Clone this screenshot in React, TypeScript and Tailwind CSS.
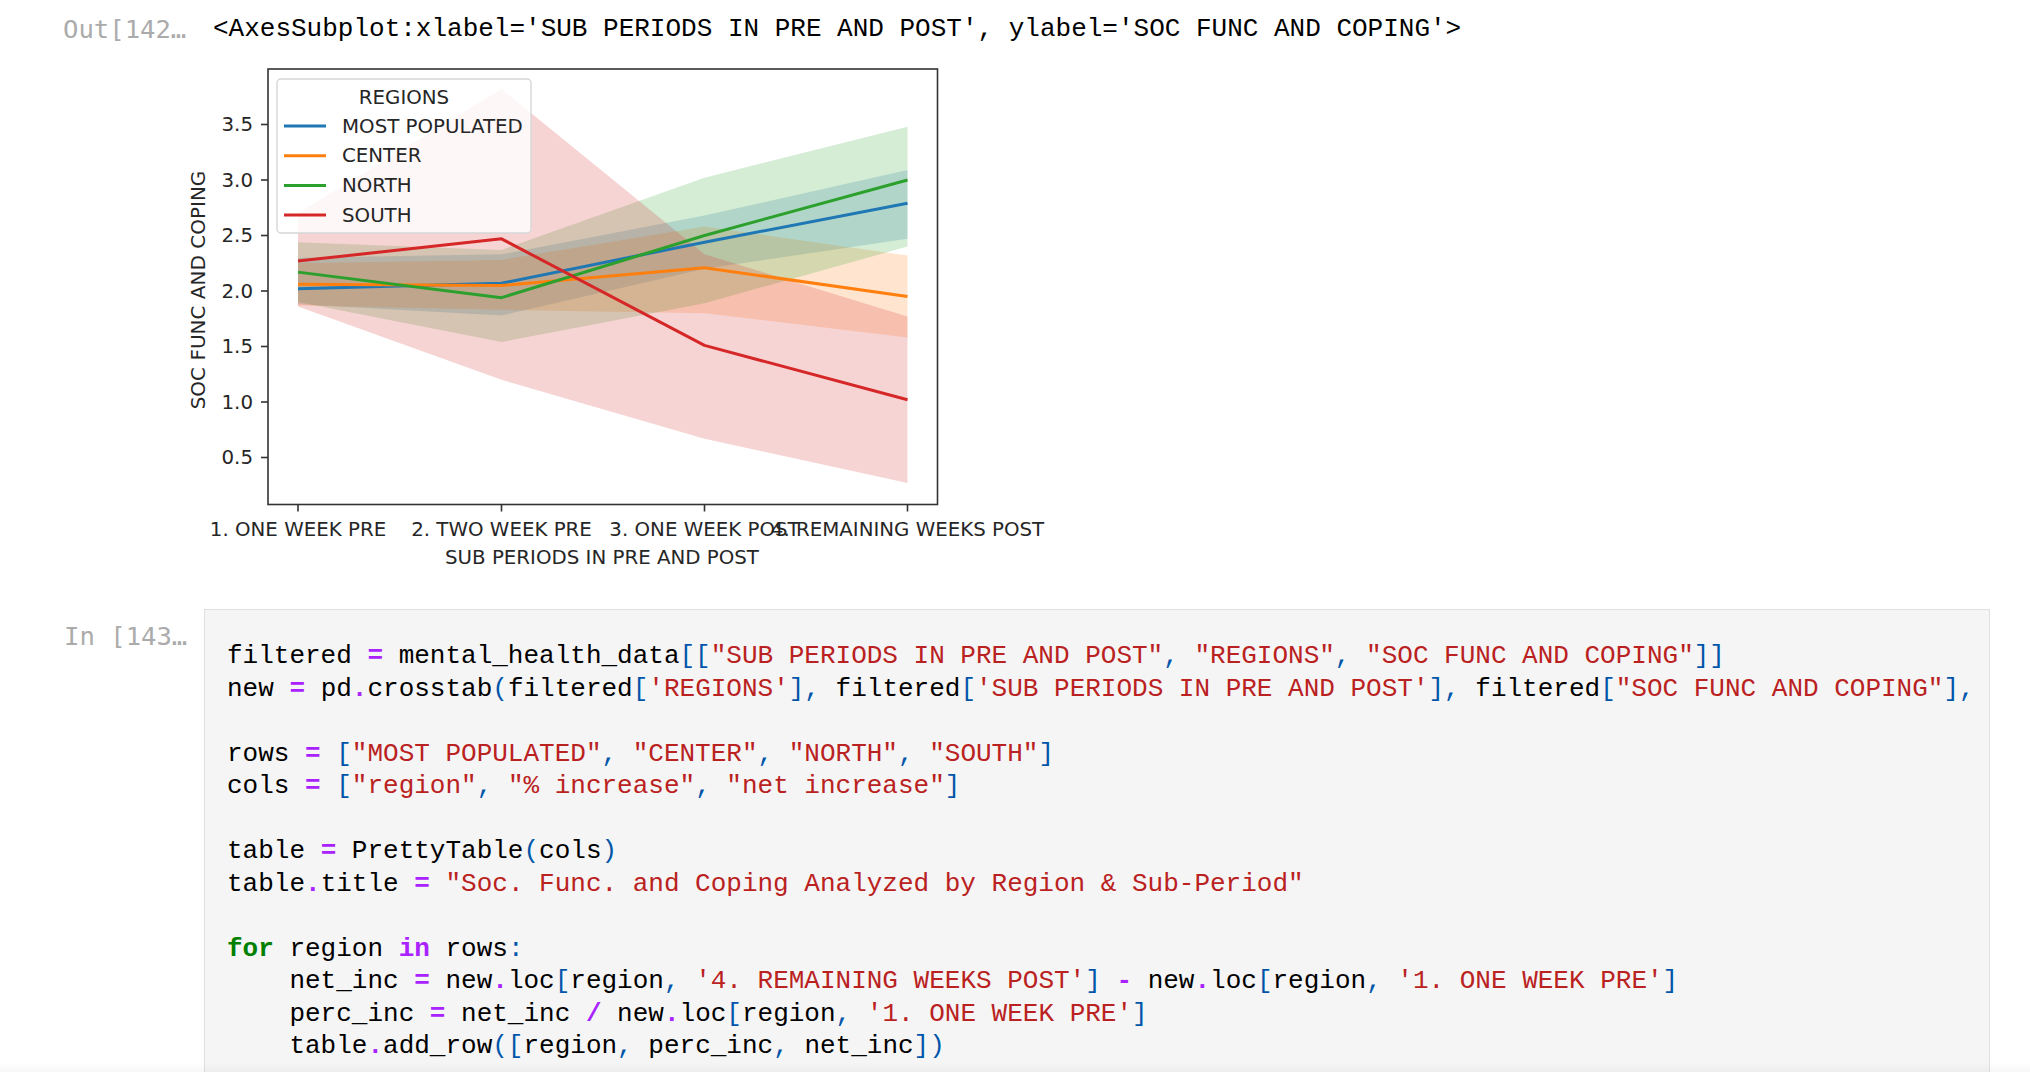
import React from 'react';

type Tok = [string, string];

const V = 'text-[#000000]';
const O = 'text-[#AA22FF] font-bold';
const S = 'text-[#BA2121]';
const P = 'text-[#0055AA]';
const K = 'text-[#008000] font-bold';

const code: Tok[][] = [
  [['filtered ', V], ['=', O], [' mental_health_data', V], ['[[', P], ['"SUB PERIODS IN PRE AND POST"', S], [', ', P], ['"REGIONS"', S], [', ', P], ['"SOC FUNC AND COPING"', S], [']]', P]],
  [['new ', V], ['=', O], [' pd', V], ['.', O], ['crosstab', V], ['(', P], ['filtered', V], ['[', P], ["'REGIONS'", S], ['], ', P], ['filtered', V], ['[', P], ["'SUB PERIODS IN PRE AND POST'", S], ['], ', P], ['filtered', V], ['[', P], ['"SOC FUNC AND COPING"', S], ['],', P]],
  [],
  [['rows ', V], ['=', O], [' ', V], ['[', P], ['"MOST POPULATED"', S], [', ', P], ['"CENTER"', S], [', ', P], ['"NORTH"', S], [', ', P], ['"SOUTH"', S], [']', P]],
  [['cols ', V], ['=', O], [' ', V], ['[', P], ['"region"', S], [', ', P], ['"% increase"', S], [', ', P], ['"net increase"', S], [']', P]],
  [],
  [['table ', V], ['=', O], [' PrettyTable', V], ['(', P], ['cols', V], [')', P]],
  [['table', V], ['.', O], ['title ', V], ['=', O], [' ', V], ['"Soc. Func. and Coping Analyzed by Region & Sub-Period"', S]],
  [],
  [['for', K], [' region ', V], ['in', O], [' rows', V], [':', P]],
  [['    net_inc ', V], ['=', O], [' new', V], ['.', O], ['loc', V], ['[', P], ['region', V], [', ', P], ["'4. REMAINING WEEKS POST'", S], [']', P], [' ', V], ['-', O], [' new', V], ['.', O], ['loc', V], ['[', P], ['region', V], [', ', P], ["'1. ONE WEEK PRE'", S], [']', P]],
  [['    perc_inc ', V], ['=', O], [' net_inc ', V], ['/', O], [' new', V], ['.', O], ['loc', V], ['[', P], ['region', V], [', ', P], ["'1. ONE WEEK PRE'", S], [']', P]],
  [['    table', V], ['.', O], ['add_row', V], ['([', P], ['region', V], [', ', P], ['perc_inc', V], [', ', P], ['net_inc', V], ['])', P]],
  [],
];

const XS = [298, 501.5, 704.5, 907.5];
const yv = (v: number) => 291 - (v - 2) * 111;

const series = [
  { name: 'MOST POPULATED', color: '#1f77b4', mean: [2.02, 2.07, 2.44, 2.79], lo: [1.88, 1.78, 2.2, 2.47], hi: [2.3, 2.33, 2.68, 3.09] },
  { name: 'CENTER', color: '#ff7f0e', mean: [2.06, 2.05, 2.21, 1.95], lo: [1.87, 1.83, 1.8, 1.58], hi: [2.25, 2.28, 2.58, 2.32] },
  { name: 'NORTH', color: '#2ca02c', mean: [2.17, 1.94, 2.5, 3.0], lo: [1.9, 1.54, 1.89, 2.4], hi: [2.44, 2.37, 3.02, 3.48] },
  { name: 'SOUTH', color: '#d62728', mean: [2.27, 2.47, 1.51, 1.02], lo: [1.86, 1.2, 0.67, 0.27], hi: [2.7, 3.82, 2.33, 1.77] },
];

const xLabels = ['1. ONE WEEK PRE', '2. TWO WEEK PRE', '3. ONE WEEK POST', '4. REMAINING WEEKS POST'];
const yTicks = [0.5, 1.0, 1.5, 2.0, 2.5, 3.0, 3.5];

function Chart() {
  const font = { fontFamily: 'DejaVu Sans, sans-serif' };
  const fs = 19.8;
  return (
    <svg width={880} height={530} viewBox="180 45 880 530" className="block">
      {series.map((s) => {
        const top = XS.map((x, i) => `${x},${yv(s.hi[i])}`);
        const bot = XS.map((x, i) => `${x},${yv(s.lo[i])}`).reverse();
        return <polygon key={s.name + 'b'} points={[...top, ...bot].join(' ')} fill={s.color} fillOpacity={0.2} />;
      })}
      {series.map((s) => (
        <polyline
          key={s.name}
          points={XS.map((x, i) => `${x},${yv(s.mean[i])}`).join(' ')}
          fill="none"
          stroke={s.color}
          strokeWidth={3}
          strokeLinejoin="round"
        />
      ))}

      <rect x={268} y={69} width={669.5} height={435.5} fill="none" stroke="#333" strokeWidth={1.6} />

      {yTicks.map((v) => (
        <g key={v}>
          <line x1={261} x2={268} y1={yv(v)} y2={yv(v)} stroke="#333" strokeWidth={1.6} />
          <text x={253} y={yv(v)} textAnchor="end" dominantBaseline="central" fontSize={fs} fill="#262626" style={font}>
            {v.toFixed(1)}
          </text>
        </g>
      ))}
      {XS.map((x, i) => (
        <g key={x}>
          <line x1={x} x2={x} y1={504.5} y2={511.5} stroke="#333" strokeWidth={1.6} />
          <text x={x} y={529} textAnchor="middle" dominantBaseline="central" fontSize={fs} fill="#262626" style={font}>
            {xLabels[i]}
          </text>
        </g>
      ))}
      <text x={602} y={557} textAnchor="middle" dominantBaseline="central" fontSize={fs} fill="#262626" style={font}>
        SUB PERIODS IN PRE AND POST
      </text>
      <text
        x={198}
        y={290}
        textAnchor="middle"
        dominantBaseline="central"
        fontSize={20}
        fill="#262626"
        style={font}
        transform="rotate(-90 198 290)"
      >
        SOC FUNC AND COPING
      </text>

      {/* legend */}
      <rect x={277} y={79} width={254} height={154} rx={4} fill="#ffffff" fillOpacity={0.8} stroke="#d6d6d6" strokeWidth={1.4} />
      <text x={404} y={97} textAnchor="middle" dominantBaseline="central" fontSize={fs} fill="#262626" style={font}>
        REGIONS
      </text>
      {series.map((s, i) => {
        const y = 126 + i * 29.7;
        return (
          <g key={s.name + 'l'}>
            <line x1={284} x2={326} y1={y} y2={y} stroke={s.color} strokeWidth={3} />
            <text x={342} y={y} dominantBaseline="central" fontSize={fs} fill="#262626" style={font}>
              {s.name}
            </text>
          </g>
        );
      })}
    </svg>
  );
}

export default function App() {
  return (
    <div className="relative h-[1072px] overflow-hidden bg-white">
      <div className="flex pt-[13px]">
        <div className="w-[180px] shrink-0 pl-[63px] whitespace-nowrap font-['DejaVu_Sans_Mono',monospace] text-[25.6px] leading-[32px] text-[#ababab]">
          Out[142…
        </div>
        <div className="flex flex-col">
          <div className="pl-[33px] whitespace-nowrap font-['Liberation_Mono',monospace] text-[26px] leading-[32px] text-black">
            {"<AxesSubplot:xlabel='SUB PERIODS IN PRE AND POST', ylabel='SOC FUNC AND COPING'>"}
          </div>
          <Chart />
        </div>
      </div>

      <div className="flex mt-[34px]">
        <div className="w-[204px] shrink-0 pl-[64px] pt-[11px] whitespace-nowrap font-['DejaVu_Sans_Mono',monospace] text-[25.6px] leading-[32.5px] text-[#ababab]">
          In [143…
        </div>
        <div className="flex-1 mr-[40px] overflow-hidden border border-[#e0e0e0] bg-[#f5f5f5] pl-[22px] pt-[30px] pb-[40px]">
          {code.map((line, i) => (
            <div key={i} className="h-[32.5px] whitespace-pre font-['Liberation_Mono',monospace] text-[26px] leading-[32.5px]">
              {line.map(([t, c], j) => (
                <span key={j} className={c}>
                  {t}
                </span>
              ))}
            </div>
          ))}
        </div>
      </div>

      <div className="absolute bottom-0 left-0 right-0 h-[10px] bg-gradient-to-b from-transparent to-[#00000008]" />
    </div>
  );
}
